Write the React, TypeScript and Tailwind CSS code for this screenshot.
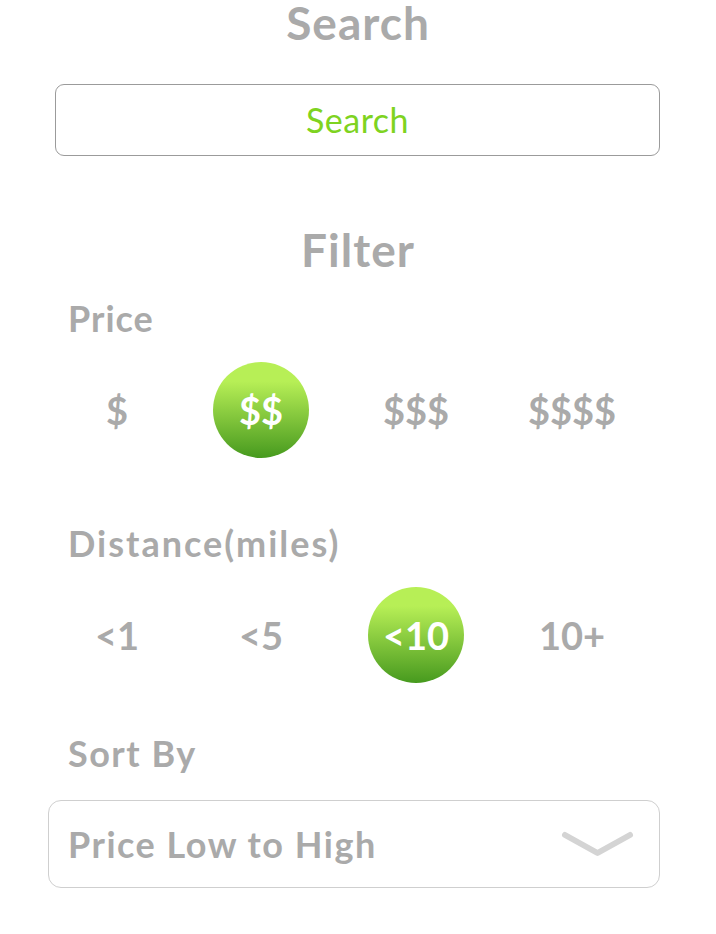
import React from "react";

const priceOptions = ["$", "$$", "$$$", "$$$$"];
const distanceOptions = ["<1", "<5", "<10", "10+"];
const gaps = ["ml-[69px]", "ml-[48px]", "ml-[59px]", "ml-[60px]"];

const OptionRow = ({ options, active }: { options: string[]; active: number }) => {
  return (
    <div className="flex items-center h-[96px]">
      {options.map((o, i) => (
        <div
          key={o}
          className={
            "w-[96px] h-[96px] rounded-full flex items-center justify-center text-[38px] font-bold leading-none " +
            gaps[i] +
            (i === active
              ? " bg-gradient-to-b from-[#b7ef56] from-[20%] to-[#469a1e] text-white"
              : " text-[#aaaaaa]")
          }
        >
          {o}
        </div>
      ))}
    </div>
  );
};

const App = () => {
  return (
    <div className="w-[716px] h-[934px] bg-white font-['Lato',sans-serif] text-[#aaaaaa]">
      <div className="pt-[1px]">
        <h1 className="text-center text-[46px] font-bold leading-[44px] tracking-[1px]">Search</h1>
      </div>
      <div className="mt-[39px] ml-[55px] w-[605px] h-[72px] border-[1.5px] border-[#9b9b9b] rounded-[9px] flex items-center justify-center">
        <span className="text-[34px] leading-none text-[#7ed321] tracking-[0.5px]">Search</span>
      </div>

      <h2 className="mt-[71px] text-center text-[46px] font-bold leading-none tracking-[1px]">Filter</h2>

      <p className="mt-[27px] ml-[68px] text-[36px] font-bold leading-none tracking-[1px]">Price</p>
      <div className="mt-[26px]">
        <OptionRow options={priceOptions} active={1} />
      </div>

      <p className="mt-[67px] ml-[68px] text-[36px] font-bold leading-none tracking-[2px]">Distance(miles)</p>
      <div className="mt-[26px]">
        <OptionRow options={distanceOptions} active={2} />
      </div>

      <p className="mt-[52px] ml-[68px] text-[36px] font-bold leading-none tracking-[1.5px]">Sort By</p>
      <div className="mt-[29px] ml-[48px] w-[612px] h-[88px] border-[1.5px] border-[#cfcfcf] rounded-[13px] flex items-center justify-between pl-[19px] pr-[25px]">
        <span className="text-[36px] font-bold leading-none tracking-[1.5px]">Price Low to High</span>
        <svg width="73" height="28" viewBox="0 0 73 28" fill="none">
          <path
            d="M4 5 L36.5 23 L69 5"
            stroke="#d4d4d4"
            strokeWidth="6"
            strokeLinecap="round"
            strokeLinejoin="round"
          />
        </svg>
      </div>
    </div>
  );
};

export default App;
